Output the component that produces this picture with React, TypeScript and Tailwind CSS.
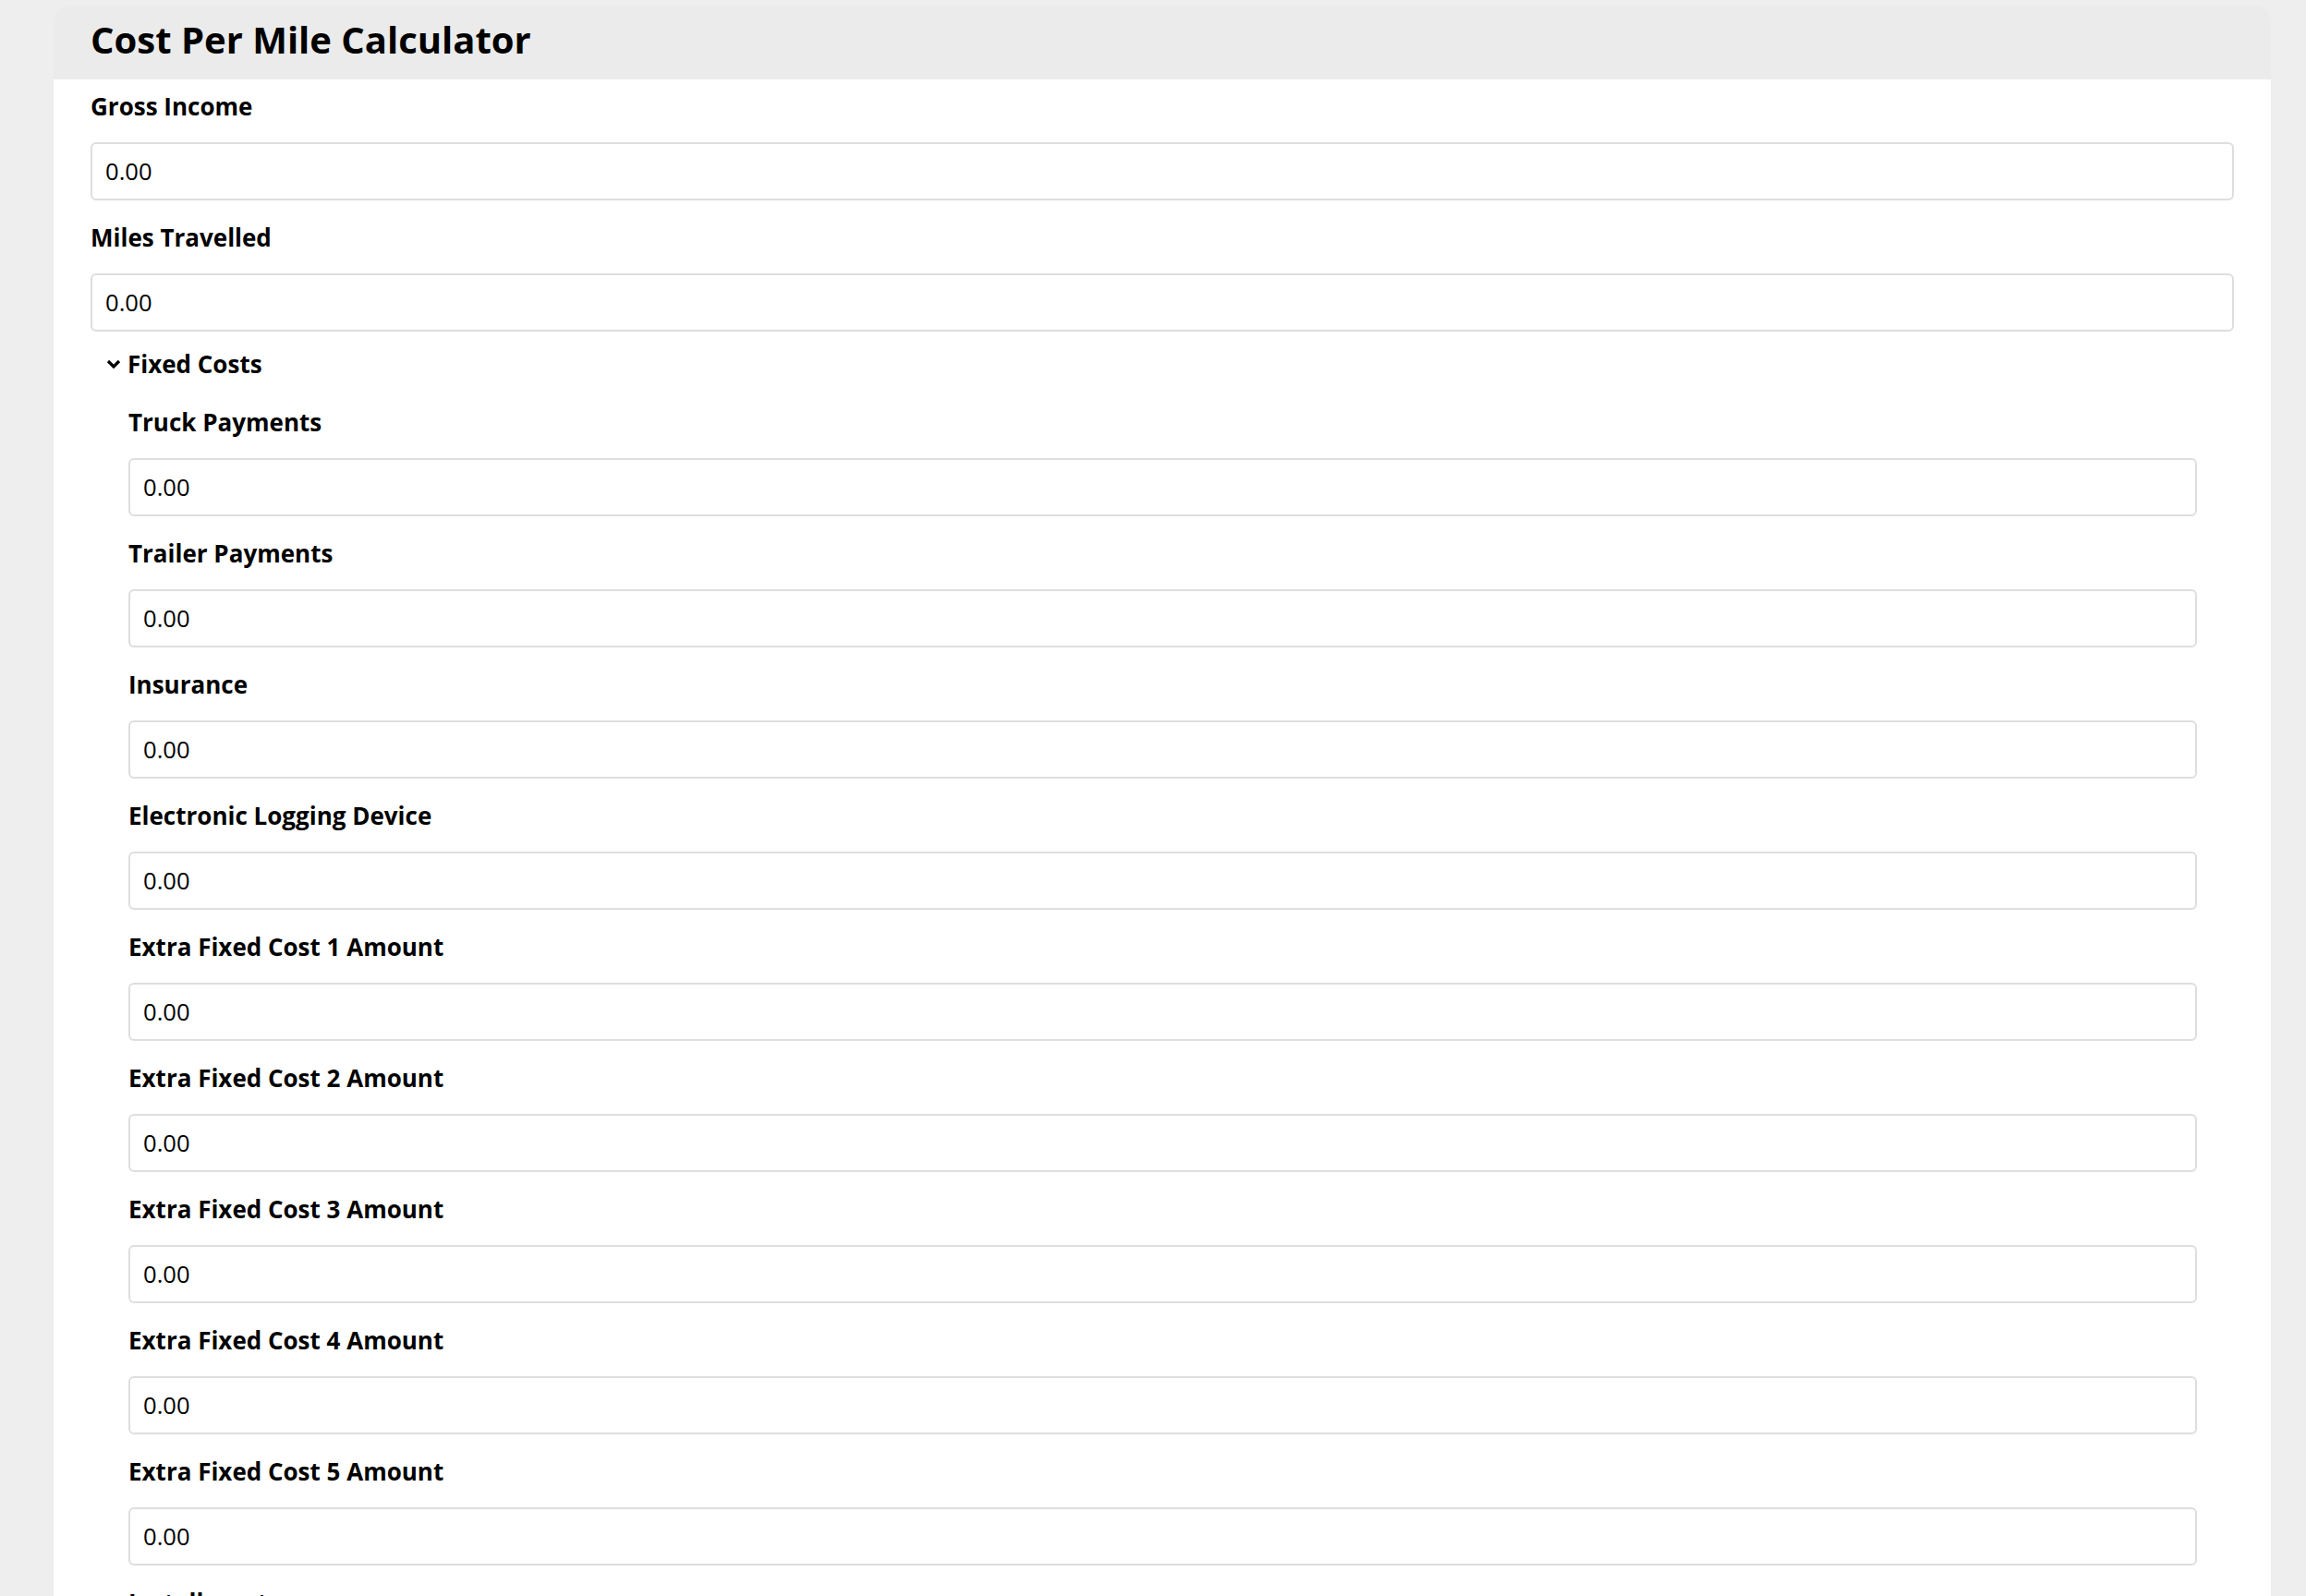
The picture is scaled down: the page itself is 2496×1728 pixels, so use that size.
import React from 'react';

const TOP_FIELDS = ['Gross Income', 'Miles Travelled'];

const FIXED_COSTS = [
  'Truck Payments',
  'Trailer Payments',
  'Insurance',
  'Electronic Logging Device',
  'Extra Fixed Cost 1 Amount',
  'Extra Fixed Cost 2 Amount',
  'Extra Fixed Cost 3 Amount',
  'Extra Fixed Cost 4 Amount',
  'Extra Fixed Cost 5 Amount',
  'Installments',
];

function Field({ label }: { label: string }) {
  return (
    <div className="mb-[21px]">
      <label className="block mb-[20px] text-[26px] leading-[38px] font-bold text-black">
        {label}
      </label>
      <input
        type="text"
        defaultValue="0.00"
        className="block w-full h-[63px] px-[14px] border-2 border-[#dedede] rounded-[6px] bg-white text-[25.6px] text-black outline-none font-['Open_Sans',sans-serif]"
      />
    </div>
  );
}

function Chevron() {
  return (
    <svg width="16" height="10" viewBox="0 0 16 10" className="shrink-0">
      <polyline points="2,2 8,8 14,2" fill="none" stroke="#000" strokeWidth="3.2" />
    </svg>
  );
}

export default function App() {
  return (
    <div className="h-[1728px] overflow-hidden bg-[#eeeeee] pt-[6px] font-['Open_Sans',sans-serif]">
      <div className="ml-[58px] w-[2400px] bg-white rounded-t-[16px] overflow-hidden">
        {/* Header */}
        <div className="h-[80px] bg-[#ebebeb] px-[40px] pt-[14px]">
          <h1 className="text-[40px] leading-[46px] font-bold text-black">Cost Per Mile Calculator</h1>
        </div>

        {/* Body */}
        <div className="px-[40px] pt-[10px]">
          {TOP_FIELDS.map((f) => (
            <Field key={f} label={f} />
          ))}

          <div className="-mt-[5px]">
            <div className="flex items-center pl-[17px] h-[38px] mb-[25px]">
              <Chevron />
              <span className="ml-[7px] text-[26px] leading-[38px] font-bold text-black">Fixed Costs</span>
            </div>
            <div className="ml-[41px] mr-[40px]">
              {FIXED_COSTS.map((f) => (
                <Field key={f} label={f} />
              ))}
            </div>
          </div>
        </div>
      </div>
    </div>
  );
}
